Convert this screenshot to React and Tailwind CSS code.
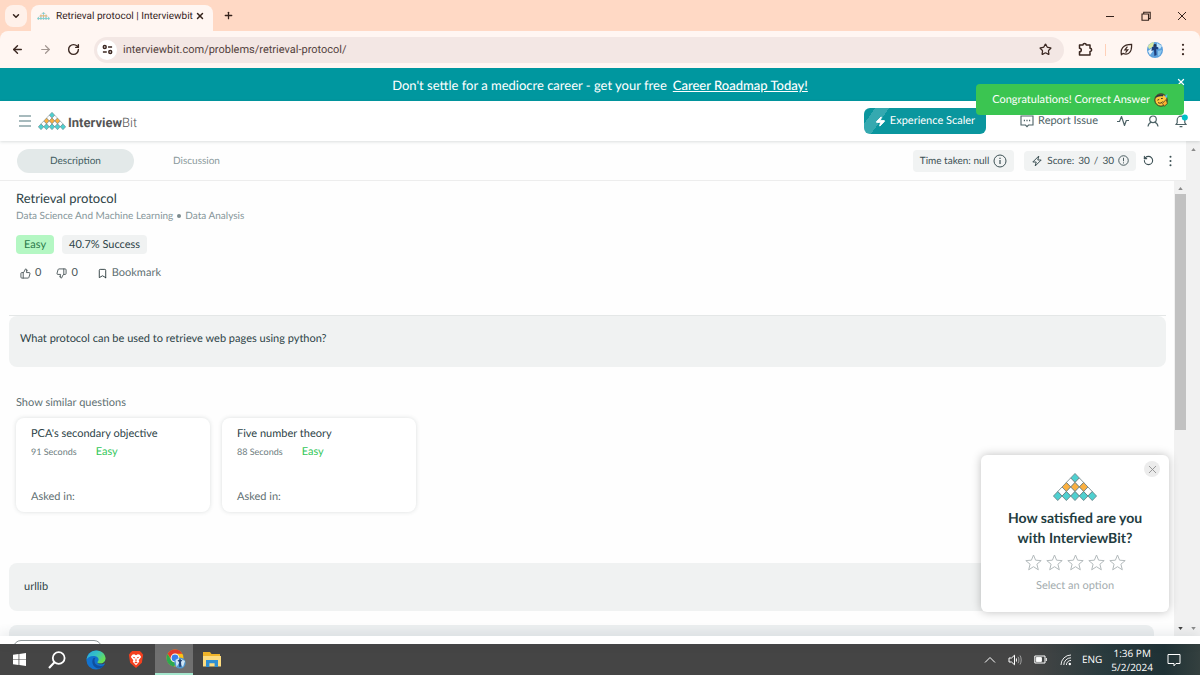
import {
  ArrowLeft,
  ArrowRight,
  Bookmark,
  ChevronDown,
  Plus,
  RotateCcw,
  RotateCw,
  Star,
  ThumbsDown,
  ThumbsUp,
  X,
  Zap,
} from "lucide-react";

const similarQuestions = [
  { title: "PCA's secondary objective", time: "91 Seconds", level: "Easy" },
  { title: "Five number theory", time: "88 Seconds", level: "Easy" },
];

function Pyramid({ className }) {
  const fills = ["#4fd0d0", "#ffffff", "#fbb040", "#ffffff", "#4fd0d0"];
  const cells = [];

  fills.forEach((fill, row) => {
    for (let i = 0; i <= row; i++) {
      const cx = 50 - row * 10 + i * 20;
      const cy = 10 + row * 10;
      cells.push(
        <path
          key={`${row}-${i}`}
          d={`M${cx} ${cy - 10}L${cx + 10} ${cy}L${cx} ${cy + 10}L${cx - 10} ${cy}Z`}
          fill={fill}
          stroke="#667b7e"
          strokeWidth="1.8"
        />
      );
    }
  });

  return (
    <svg viewBox="-1 -1 102 62" preserveAspectRatio="none" className={className} aria-hidden="true">
      {cells}
    </svg>
  );
}

function Avatar({ className }) {
  return (
    <svg viewBox="0 0 16 16" className={className} aria-hidden="true">
      <circle cx="8" cy="8" r="8" fill="#5a9fdc" />
      <path d="M1 4.5A8 8 0 0 1 7 0L6 5L2 7Z" fill="#d8e8a0" />
      <path d="M10 1L15 4L13 7L10 5Z" fill="#bfe3f7" />
      <path d="M1 9L5 6L6 9L3 13Z" fill="#dff0fa" />
      <path d="M5 5L8 4L11.4 5.4L10.6 7.4L9.2 7L9.6 13L7.4 14L7 8L4.4 9Z" fill="#1d3f7c" />
      <path d="M11 9L15 8L13 13L11 14Z" fill="#8cc7ee" />
      <circle cx="8" cy="3.4" r="1.4" fill="#25344f" />
    </svg>
  );
}

function Dots({ className }) {
  return (
    <svg viewBox="0 0 4 14" className={className} fill="currentColor" aria-hidden="true">
      <circle cx="2" cy="2" r="1.2" />
      <circle cx="2" cy="7" r="1.2" />
      <circle cx="2" cy="12" r="1.2" />
    </svg>
  );
}

function Arrow({ down, className }) {
  return (
    <svg viewBox="0 0 6 4" className={className} fill="currentColor" aria-hidden="true">
      <path d={down ? "M0 0H6L3 4Z" : "M0 4H6L3 0Z"} />
    </svg>
  );
}

function TabStrip() {
  return (
    <div className="flex h-[31px] shrink-0 items-end bg-[#ffd9c5] text-[#35231c]">
      <button aria-label="Search tabs" className="mb-1 ml-[5px] flex h-[22px] w-[22px] items-center justify-center rounded-lg bg-[#fff1ea]">
        <ChevronDown size={10} strokeWidth={3.5} />
      </button>
      <div className="ml-1 flex h-[26px] w-[182px] items-center rounded-t-lg bg-[#fff6f2] pr-2 pb-1 pl-[6px]">
        <Pyramid className="h-2 w-[13px] shrink-0 opacity-80" />
        <span className="ml-[6px] flex-1 text-[10px] whitespace-nowrap">Retrieval protocol | Interviewbit</span>
        <button aria-label="Close tab">
          <X size={10} strokeWidth={3.5} />
        </button>
      </div>
      <button aria-label="New tab" className="mb-[10px] ml-[10px]">
        <Plus size={11} strokeWidth={2.8} />
      </button>
      <div className="mr-[13px] mb-[10px] ml-auto flex items-center gap-[26px]">
        <button aria-label="Minimize">
          <svg viewBox="0 0 10 10" className="h-[10px] w-[10px]" stroke="currentColor"><path d="M1 5.5H9" /></svg>
        </button>
        <button aria-label="Restore">
          <svg viewBox="0 0 10 10" className="h-[10px] w-[10px]" stroke="currentColor" fill="none" strokeWidth="1.1">
            <path d="M1 3H7.5V9.3H1ZM2.7 3V1.2H9.2V7.6H7.5" />
          </svg>
        </button>
        <button aria-label="Close window">
          <svg viewBox="0 0 10 10" className="h-[10px] w-[10px]" stroke="currentColor"><path d="M1 1L9 9M9 1L1 9" /></svg>
        </button>
      </div>
    </div>
  );
}

function Toolbar() {
  return (
    <div className="flex h-[37px] shrink-0 items-center rounded-t-lg bg-[#fff6f2] pr-[15px] pl-[11px] text-[#3b2822]">
      <button aria-label="Back"><ArrowLeft size={13} strokeWidth={2.6} /></button>
      <button aria-label="Forward" className="ml-[15px] text-[#a39792]"><ArrowRight size={13} strokeWidth={2.2} /></button>
      <button aria-label="Reload" className="ml-[15px]"><RotateCw size={13} strokeWidth={2.6} /></button>
      <div className="ml-[14px] flex h-[26px] flex-1 items-center rounded-full bg-[#f3e7e4] pr-3 pl-[3px]">
        <button aria-label="Site information" className="flex h-5 w-5 items-center justify-center rounded-full bg-white">
          <svg viewBox="0 0 12 12" className="h-[11px] w-[11px]" fill="none" stroke="currentColor" strokeWidth="1.6" aria-hidden="true">
            <circle cx="3" cy="3.2" r="1.6" />
            <path d="M6.6 3.2H11M1 8.8H5.2" />
            <circle cx="9" cy="8.8" r="1.6" />
          </svg>
        </button>
        <input
          aria-label="Address"
          type="text"
          defaultValue="interviewbit.com/problems/retrieval-protocol/"
          className="ml-[6px] min-w-0 flex-1 bg-transparent pt-[2px] text-[11px] text-[#54433e] outline-none"
        />
        <button aria-label="Bookmark this tab"><Star size={13} strokeWidth={2.3} /></button>
      </div>
      <button aria-label="Extensions" className="ml-[14px]">
        <svg viewBox="0 0 15 15" className="h-[15px] w-[15px]" fill="none" stroke="currentColor" strokeWidth="1.5" strokeLinejoin="round">
          <path d="M1.5 3H5A1.6 1.6 0 0 1 8.2 3H12V6.2A1.6 1.6 0 0 1 12 9.4V13H1.5V9.8A1.8 1.8 0 0 0 1.5 6.2Z" />
        </svg>
      </button>
      <span className="ml-3 h-3 w-px bg-[#ffd0b8]" />
      <button aria-label="Energy saver" className="ml-[14px]">
        <svg viewBox="0 0 14 14" className="h-[13px] w-[13px]" fill="none" stroke="currentColor" strokeWidth="1.3">
          <path d="M1.5 12.5C.4 7 2.5 1.5 12.5 1.5C13 10 9 13.4 3.2 11.2Z" />
          <path d="M8 4L5.3 7.3H8.4L6 10.4" />
        </svg>
      </button>
      <button aria-label="Profile" className="ml-[14px]"><Avatar className="h-4 w-4" /></button>
      <button aria-label="Menu" className="ml-[18px]"><Dots className="h-[13px] w-1" /></button>
    </div>
  );
}

function Banner() {
  return (
    <div className="relative flex h-[33px] shrink-0 items-center justify-center bg-[#00979f] pt-[2px] text-[13px] text-white">
      <span>Don't settle for a mediocre career - get your free</span>
      <a href="#roadmap" className="ml-[6px] font-medium underline">Career Roadmap Today!</a>
      <button aria-label="Dismiss banner" className="absolute top-[9px] right-[14px]"><X size={10} strokeWidth={3} /></button>
    </div>
  );
}

function Header() {
  return (
    <header className="z-10 flex h-10 shrink-0 items-center bg-white pr-3 pl-[19px] text-[#4d6266] shadow-[0_1px_3px_rgba(60,80,80,0.18)]">
      <button aria-label="Open menu">
        <svg viewBox="0 0 12 12" className="h-3 w-3" stroke="#50777c" strokeWidth="1.2"><path d="M0 1H12M0 6H12M0 11H12" /></svg>
      </button>
      <a href="#home" className="ml-[7px] flex items-center">
        <Pyramid className="h-[18px] w-[28px]" />
        <span className="ml-[2px] pt-[6px] font-[Roboto,sans-serif] text-[13px] text-[#555]">
          <b className="font-bold">Interview</b><span className="font-light">Bit</span>
        </span>
      </a>
      <button className="ml-auto flex h-[26px] items-center rounded-md bg-[linear-gradient(125deg,#0a969e_8%,#35a9b0_8%,#35a9b0_18%,#0a969e_18%)] px-[11px] text-[11px] text-white">
        <Zap size={11} fill="currentColor" />
        <span className="ml-1 pt-px">Experience Scaler</span>
      </button>
      <button className="ml-[34px] flex items-center text-[11px]">
        <svg viewBox="0 0 14 14" className="h-[14px] w-[14px]" fill="none" stroke="currentColor" strokeWidth="1.1" aria-hidden="true">
          <path d="M1 2H13V11H8.5L7 12.6L5.5 11H1Z" />
          <path d="M3.8 6.5H5M6.4 6.5H7.6M9 6.5H10.2" strokeWidth="1.4" />
        </svg>
        <span className="ml-1 pt-px">Report Issue</span>
      </button>
      <button aria-label="Activity" className="ml-[19px]">
        <svg viewBox="0 0 12 12" className="h-3 w-3" fill="none" stroke="currentColor" strokeWidth="1.2" strokeLinejoin="round">
          <path d="M0 6.5H2.5L4.5 1.5L7.5 10.5L9.3 5.5H12" />
        </svg>
      </button>
      <button aria-label="Account" className="ml-[18px]">
        <svg viewBox="0 0 12 12" className="h-3 w-3" fill="none" stroke="currentColor" strokeWidth="1.2">
          <circle cx="6" cy="4.3" r="3.3" />
          <path d="M1 11.5C1.4 9 3 7.6 4.4 7.2M11 11.5C10.6 9 9 7.6 7.6 7.2" />
        </svg>
      </button>
      <button aria-label="Notifications" className="ml-4">
        <svg viewBox="0 0 13 14" className="h-[14px] w-[13px]" fill="none" stroke="currentColor" strokeWidth="1.2">
          <path d="M1 10.5H11L9.8 8.8V6A3.8 3.8 0 0 0 2.2 6V8.8ZM4.6 12.6H7.4" />
          <circle cx="9.8" cy="3.6" r="3" fill="#00c2c7" stroke="none" />
        </svg>
      </button>
    </header>
  );
}

function SubNav() {
  return (
    <nav className="flex h-10 shrink-0 items-center border-b border-[#ededed] pr-[13px] pl-[17px] text-[10px] text-[#3d5155]">
      <button className="h-6 w-[117px] rounded-full bg-[#e3e9e9] pt-[2px] text-[#3f5c60]">Description</button>
      <button className="ml-1 h-6 w-[117px] pt-[2px] text-[#8b9a9c]">Discussion</button>
      <button className="ml-auto flex h-[22px] items-center rounded bg-[#f1f3f3] px-[7px]">
        <span className="pt-[2px]">Time taken: null</span>
        <svg viewBox="0 0 14 14" className="ml-1 h-[14px] w-[14px]" fill="none" stroke="currentColor" aria-hidden="true">
          <circle cx="7" cy="7" r="6" />
          <path d="M7 6V10M7 3.8V5" strokeWidth="1.2" />
        </svg>
      </button>
      <button className="ml-[10px] flex h-5 items-center rounded bg-[#f1f3f3] px-[7px]">
        <svg viewBox="0 0 12 12" className="h-3 w-3" fill="none" stroke="currentColor" strokeLinejoin="round" aria-hidden="true">
          <path d="M7.8 1L1.8 7H5.2L4.2 11L10.2 5H6.8Z" />
        </svg>
        <span className="ml-1 flex gap-1 pt-[2px]">
          <span>Score:</span>
          <span>30</span>
          <span>/</span>
          <span>30</span>
        </span>
        <svg viewBox="0 0 12 12" className="ml-1 h-[11px] w-[11px]" fill="none" stroke="currentColor" aria-hidden="true">
          <circle cx="6" cy="6" r="5.2" />
          <path d="M6 3V6.8M6 8V9.2" />
        </svg>
      </button>
      <button aria-label="Reset" className="ml-[7px]"><RotateCcw size={11} strokeWidth={2.4} /></button>
      <button aria-label="More" className="ml-[14px]"><Dots className="h-3 w-[5px]" /></button>
    </nav>
  );
}

function SimilarCard({ question }) {
  return (
    <a href="#question" className="flex h-[94px] w-[194px] flex-col rounded-lg bg-white px-[15px] pt-2 pb-[7px] shadow-[0_0_4px_rgba(60,80,80,0.18)]">
      <span className="text-[11px] leading-4 text-[#2d4347]">{question.title}</span>
      <span className="mt-[2px] flex items-center">
        <span className="text-[9px] leading-4 text-[#6d7c7e]">{question.time}</span>
        <span className="ml-[19px] text-[11px] leading-4 text-[#34c759]">{question.level}</span>
      </span>
      <span className="mt-auto text-[11px] leading-4 text-[#5f7073]">Asked in:</span>
    </a>
  );
}

function Problem() {
  return (
    <main className="min-w-0 flex-1 overflow-hidden pt-[7px] pr-2 pl-[9px]">
      <div className="pl-[7px]">
        <h1 className="text-[13px] leading-5 text-[#2d4347]">Retrieval protocol</h1>
        <p className="flex items-center text-[10px] leading-4 text-[#86969a]">
          <span>Data Science And Machine Learning</span>
          <span className="mx-1 h-1 w-1 rounded-full bg-[#7b8b8e]" />
          <span>Data Analysis</span>
        </p>
        <div className="mt-[11px] flex gap-2 text-[11px] leading-[19px]">
          <span className="rounded bg-[#b4f7c3] px-2 text-[#2b7a4a]">Easy</span>
          <span className="rounded bg-[#f0f2f2] px-[7px] text-[#2d4347]">40.7% Success</span>
        </div>
        <div className="mt-[11px] flex items-center pl-1 text-[11px] leading-4 text-[#4a5759]">
          <button className="flex items-center gap-1"><ThumbsUp size={11} />0</button>
          <button className="ml-[15px] flex items-center gap-1"><ThumbsDown size={11} />0</button>
          <button className="ml-[19px] flex items-center gap-1 text-[#5f7073]"><Bookmark size={11} className="text-[#2b3a3c]" />Bookmark</button>
        </div>
      </div>

      <div className="mt-[34px] border-t border-[#e4e7e7]">
        <p className="h-[51px] rounded-lg bg-[#f0f2f2] px-[11px] pt-[15px] text-[11px] leading-4 text-[#2d4347]">
          What protocol can be used to retrieve web pages using python?
        </p>
      </div>

      <h2 className="mt-7 pl-[7px] text-[11px] leading-4 text-[#5f7073]">Show similar questions</h2>
      <div className="mt-[7px] flex gap-3 pl-[7px]">
        {similarQuestions.map((question) => (
          <SimilarCard key={question.title} question={question} />
        ))}
      </div>

      <div className="mt-[51px] flex flex-col gap-[14px] pr-3">
        <button className="h-12 rounded-lg bg-[#f0f2f2] px-[15px] pt-px text-left text-[11px] text-[#2d4347]">urllib</button>
        <button aria-label="Next option" className="h-12 rounded-lg bg-[#eceff0]" />
      </div>
    </main>
  );
}

function Toast() {
  return (
    <div role="status" className="absolute top-[84px] right-4 z-20 flex h-[31px] items-center rounded-sm bg-[#3bc551] px-4 text-[11px] text-white">
      <span className="pt-px">Congratulations! Correct Answer</span>
      <svg viewBox="0 0 14 14" className="ml-1 h-[14px] w-[14px]" aria-hidden="true">
        <circle cx="7" cy="7" r="6.2" fill="#ffc83d" stroke="#3a3320" />
        <path d="M1.2 5.4C1.5 2 6 .4 10 1.8L8.6 3.4C6 2.8 3.4 3.6 1.2 5.4Z" fill="#2c3540" />
        <path d="M3.4 7.2L5.2 6.4M7 5.6L8.8 5.4M4 9.6C6 10.8 8 10 8.8 8.4" fill="none" stroke="#49351b" />
        <path d="M8.4 10.5L12.2 6.4L13.4 10.6L10.4 13.2Z" fill="#ffb02e" stroke="#3a3320" strokeWidth=".7" />
        <path d="M10.4 3.4L13.4 1L13 5Z" fill="#58b7e8" />
      </svg>
    </div>
  );
}

function SurveyPopup() {
  return (
    <div role="dialog" aria-label="Survey" className="absolute right-[31px] bottom-[63px] z-20 flex w-[188px] flex-col items-center rounded-md bg-white pt-[18px] pb-[18px] text-center shadow-[0_0_10px_rgba(0,0,0,0.25)]">
      <button aria-label="Close survey" className="absolute top-[6px] right-[9px] flex h-4 w-4 items-center justify-center rounded-full bg-[#ececec] text-[#8c8c8c]">
        <X size={13} strokeWidth={1.6} />
      </button>
      <Pyramid className="h-[28px] w-[44px]" />
      <p className="mt-[7px] text-[14px] leading-5 font-bold text-[#1f3d41]">
        How satisfied are you
        <br />
        with InterviewBit?
      </p>
      <div className="mt-[6px] flex gap-1">
        {[1, 2, 3, 4, 5].map((n) => (
          <button key={n} aria-label={`${n} stars`} className="text-[#b3babc]">
            <svg viewBox="0 0 17 17" className="h-[17px] w-[17px]" fill="none" stroke="currentColor">
              <path d="M8.5 1L10.6 6.2L16.2 6.6L11.9 10.2L13.3 15.8L8.5 12.7L3.7 15.8L5.1 10.2L.8 6.6L6.4 6.2Z" />
            </svg>
          </button>
        ))}
      </div>
      <p className="mt-[7px] text-[11px] leading-4 text-[#a3acae]">Select an option</p>
    </div>
  );
}

function EdgeIcon() {
  return (
    <svg viewBox="0 0 20 20" className="h-5 w-5" aria-hidden="true">
      <defs>
        <linearGradient id="edgeTop" x1="0" y1="0" x2="1" y2="0.6">
          <stop offset="0" stopColor="#2aa7e0" />
          <stop offset="0.5" stopColor="#35c1c5" />
          <stop offset="1" stopColor="#6be04d" />
        </linearGradient>
      </defs>
      <circle cx="10" cy="10" r="9.6" fill="#1272cf" />
      <path d="M.5 9.5C1.5 3.5 6 .4 10.5 .4C16 .4 19.6 4.5 19.6 8.6C19.6 12 17 13.6 14.5 13.6C12.5 13.6 11.4 12.9 11.4 12.3C11.4 11.6 12.6 11.3 12.6 9.6C12.6 7.4 10.2 6 7.4 6C4 6 1.5 7.6 .5 9.5Z" fill="url(#edgeTop)" />
      <path d="M7.6 8C5.4 10.5 6 15.5 10 17.8C13 19.3 16.5 17.8 18.2 15.2C14 17 8.5 15.5 8.5 10.8C8.5 9.5 9 8.5 9.6 7.8Z" fill="#104f9e" />
      <path d="M11.4 12.3C11.4 13.8 14.5 15.6 18.8 13.2L20 15V10L19.6 8.6C19.6 12 17 13.6 14.5 13.6C12.5 13.6 11.4 12.9 11.4 12.3Z" fill="#454545" />
    </svg>
  );
}

function BraveIcon() {
  return (
    <svg viewBox="0 0 16 20" className="h-[19px] w-4" aria-hidden="true">
      <path d="M4 1H12L14 3L15.5 5L14.2 13.5L8 19L1.8 13.5L.5 5L2 3Z" fill="#f4401f" />
      <path d="M4 5L6 4.6L8 5.4L10 4.6L12 5L13.4 7.4L10.8 10.8L11.4 12.4L8 16L4.6 12.4L5.2 10.8L2.6 7.4Z" fill="#fff" />
      <path d="M4.4 7L7 7.6L6.2 9ZM11.6 7L9 7.6L9.8 9ZM8 8.4L8.8 11L8 11.8L7.2 11ZM6.2 12.8L8 12L9.8 12.8L8 14.2Z" fill="#f4401f" />
    </svg>
  );
}

function ChromeIcon() {
  return (
    <svg viewBox="0 0 20 20" className="h-5 w-5" aria-hidden="true">
      <circle cx="9" cy="9" r="8.5" fill="#fbc116" />
      <path d="M1.6 4.8A8.5 8.5 0 0 1 16.4 4.8H9A4.2 4.2 0 0 0 5.2 10.8Z" fill="#e33b2e" />
      <path d="M1.6 4.8A8.5 8.5 0 0 0 8 17.5L11.6 12.2A4.2 4.2 0 0 1 5.2 11Z" fill="#2da94f" />
      <circle cx="9" cy="9" r="4.4" fill="#fff" />
      <circle cx="9" cy="9" r="3.4" fill="#3b7fea" />
      <circle cx="14" cy="14" r="5.6" fill="#4f97cf" />
      <path d="M9.5 11L13 9L13 14L10.5 18ZM15 10L19 12L17 18L15 16Z" fill="#cfe6f6" />
      <path d="M11.5 11.4L14 10.2L16.4 11.6L15 12.8L15.4 17.5L13.2 18L13 13Z" fill="#24457a" />
    </svg>
  );
}

function FolderIcon() {
  return (
    <svg viewBox="0 0 18 15" className="h-[15px] w-[18px]" aria-hidden="true">
      <path d="M0 0H7L8.5 2H17V14H0Z" fill="#f0b429" />
      <path d="M0 4H18V14.5H0Z" fill="#fddc80" />
      <path d="M3 8H15V15H11.6V11.2H6.4V15H3Z" fill="#2f8fd3" />
    </svg>
  );
}

function Taskbar() {
  return (
    <footer className="flex h-[31px] shrink-0 items-center bg-[linear-gradient(90deg,#454545_0%,#454545_86%,#2a3b3e_92%,#1f3135_97%,#34403f_100%)] text-white">
      <button aria-label="Start" className="flex h-full w-[38px] items-center justify-center">
        <svg viewBox="0 0 14 14" className="h-[13px] w-[13px]" fill="currentColor">
          <path d="M0 2L6 1.1V6.6H0ZM6.8 1L14 0V6.6H6.8ZM0 7.4H6V12.9L0 12ZM6.8 7.4H14V14L6.8 13Z" />
        </svg>
      </button>
      <button aria-label="Search" className="flex h-full w-[38px] items-center justify-center">
        <svg viewBox="0 0 18 18" className="h-[18px] w-[18px]" fill="none" stroke="currentColor" strokeWidth="1.8">
          <circle cx="10.7" cy="7" r="5.9" />
          <path d="M6.5 11.3L1 17" strokeWidth="2.1" />
        </svg>
      </button>
      <button aria-label="Edge" className="flex h-full w-10 items-center justify-center"><EdgeIcon /></button>
      <button aria-label="Brave" className="flex h-full w-[39px] items-center justify-center"><BraveIcon /></button>
      <button aria-label="Chrome" className="flex h-full w-[38px] items-center justify-center border-b-2 border-[#a4e6cd] bg-[#707070] pl-1"><ChromeIcon /></button>
      <button aria-label="File Explorer" className="flex h-full w-[38px] items-center justify-center"><FolderIcon /></button>

      <div className="mr-[19px] ml-auto flex items-center">
        <button aria-label="Hidden icons">
          <svg viewBox="0 0 12 8" className="h-2 w-3" fill="none" stroke="currentColor"><path d="M1 6.5L6 1.5L11 6.5" /></svg>
        </button>
        <button aria-label="Volume" className="ml-3">
          <svg viewBox="0 0 14 12" className="h-3 w-[14px]" fill="none" stroke="currentColor">
            <path d="M1 4H3.5L6.5 1.2V10.8L3.5 8H1Z" />
            <path d="M8.4 4.4V7.6" />
            <path d="M10 2.8C11.2 4.5 11.2 7.5 10 9.2M12 1.5C13.6 4 13.6 8 12 10.5" opacity=".5" />
          </svg>
        </button>
        <button aria-label="Battery" className="ml-3">
          <svg viewBox="0 0 13 9" className="h-[9px] w-[13px]" fill="none" stroke="currentColor">
            <path d="M.8 1H11V8H.8ZM12.3 3V6" />
            <path d="M2.3 2.6H7.4V6.4H2.3Z" fill="currentColor" />
          </svg>
        </button>
        <button aria-label="Network" className="ml-[13px]">
          <svg viewBox="0 0 12 12" className="h-3 w-3" fill="none" stroke="currentColor" strokeWidth=".9">
            <path d="M1 11A10 10 0 0 1 11 1M3.8 11A7.2 7.2 0 0 1 11 3.8M6.4 11A4.6 4.6 0 0 1 11 6.4" />
            <circle cx="9.8" cy="10" r="1.2" fill="currentColor" stroke="none" />
          </svg>
        </button>
        <button className="ml-[10px] font-['Open_Sans',sans-serif] text-[10px]">ENG</button>
        <button className="ml-[9px] text-center font-['Open_Sans',sans-serif] text-[10px] leading-[14px]">
          1:36 PM
          <br />
          5/2/2024
        </button>
        <button aria-label="Notifications" className="ml-[14px]">
          <svg viewBox="0 0 14 14" className="h-[14px] w-[14px]" fill="none" stroke="currentColor">
            <path d="M1 1.5H13V10.5H9L7 12.8V10.5H1Z" />
          </svg>
        </button>
      </div>
    </footer>
  );
}

export default function App() {
  return (
    <div className="relative flex h-screen flex-col overflow-hidden bg-[#fefefe] font-[Lato,sans-serif] [text-rendering:geometricPrecision] [&_button]:[text-rendering:inherit] [&_input]:[text-rendering:inherit]">
      <div className="bg-[#ffd9c5] font-[Roboto,'Segoe_UI',sans-serif]">
        <TabStrip />
        <Toolbar />
      </div>
      <Banner />
      <Header />

      <div className="flex min-h-0 flex-1">
        <div className="flex min-w-0 flex-1 flex-col">
          <SubNav />
          <div className="flex min-h-0 flex-1">
            <Problem />
            <div className="flex w-3 flex-col items-center bg-[#f1f1f1] pt-[6px] pb-[6px]">
              <Arrow className="h-[3px] w-[5px] shrink-0 text-[#8a8a8a]" />
              <div className="mt-1 h-[236px] w-[11px] bg-[#c1c1c1]" />
              <Arrow down className="mt-auto h-[3px] w-[5px] shrink-0 text-[#404040]" />
            </div>
          </div>
        </div>
        <div className="flex w-[14px] flex-col items-center justify-between bg-[#f1f1f1] pt-[7px] pb-[6px] text-[#8a8a8a]">
          <Arrow className="h-[3px] w-[5px]" />
          <Arrow down className="h-[3px] w-[5px]" />
        </div>
      </div>

      <div className="z-10 h-2 shrink-0 overflow-hidden bg-white pt-1 pl-[13px] shadow-[0_-2px_12px_rgba(60,80,90,0.14)]">
        <button aria-label="Actions" className="h-6 w-[89px] rounded-lg border border-[#8d9698] bg-white" />
      </div>

      <Taskbar />

      <Toast />
      <SurveyPopup />
    </div>
  );
}
